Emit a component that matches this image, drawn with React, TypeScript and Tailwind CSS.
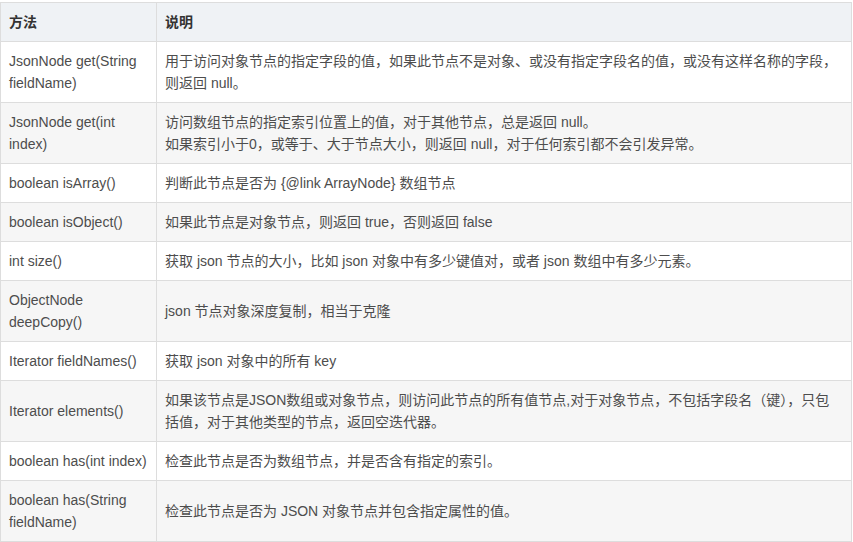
import React from 'react';

type Row = { method: React.ReactNode; desc: React.ReactNode };

const rows: Row[] = [
    {
        method: <>JsonNode get(String<br />fieldName)</>,
        desc: <>用于访问对象节点的指定字段的值，如果此节点不是对象、或没有指定字段名的值，或没有这样名称的字段，<br />则返回 null。</>,
    },
    {
        method: <>JsonNode get(int<br />index)</>,
        desc: <>访问数组节点的指定索引位置上的值，对于其他节点，总是返回 null。<br />如果索引小于0，或等于、大于节点大小，则返回 null，对于任何索引都不会引发异常。</>,
    },
    { method: 'boolean isArray()', desc: '判断此节点是否为 {@link ArrayNode} 数组节点' },
    { method: 'boolean isObject()', desc: '如果此节点是对象节点，则返回 true，否则返回 false' },
    { method: 'int size()', desc: '获取 json 节点的大小，比如 json 对象中有多少键值对，或者 json 数组中有多少元素。' },
    { method: <>ObjectNode<br />deepCopy()</>, desc: 'json 节点对象深度复制，相当于克隆' },
    { method: 'Iterator fieldNames()', desc: '获取 json 对象中的所有 key' },
    {
        method: 'Iterator elements()',
        desc: <>如果该节点是JSON数组或对象节点，则访问此节点的所有值节点,对于对象节点，不包括字段名（键），只包<br />括值，对于其他类型的节点，返回空迭代器。</>,
    },
    { method: 'boolean has(int index)', desc: '检查此节点是否为数组节点，并是否含有指定的索引。' },
    { method: <>boolean has(String<br />fieldName)</>, desc: '检查此节点是否为 JSON 对象节点并包含指定属性的值。' },
];

export default function App() {
    return (
        <div className="w-[853px] h-[542px] bg-white pt-[2px] font-['Liberation_Sans','Noto_Sans_CJK_SC',sans-serif] text-[14px] leading-[22px] text-[#4d4d4d]">
            <table className="w-[852px] table-fixed border-collapse">
                <colgroup>
                    <col className="w-[156px]" />
                    <col />
                </colgroup>
                <thead>
                    <tr className="bg-[#eff2f5] h-[39px]">
                        <th className="border border-[#dddddd] px-2 text-left font-bold text-[#333333]">方法</th>
                        <th className="border border-[#dddddd] px-2 text-left font-bold text-[#333333]">说明</th>
                    </tr>
                </thead>
                <tbody>
                    {rows.map((row, i) => (
                        <tr key={i} className={i % 2 === 0 ? 'bg-white' : 'bg-[#f6f6f6]'}>
                            <td className="border border-[#dddddd] px-2 py-2 align-middle whitespace-nowrap">{row.method}</td>
                            <td className="border border-[#dddddd] px-2 py-2 align-middle whitespace-nowrap">{row.desc}</td>
                        </tr>
                    ))}
                </tbody>
            </table>
        </div>
    );
}
